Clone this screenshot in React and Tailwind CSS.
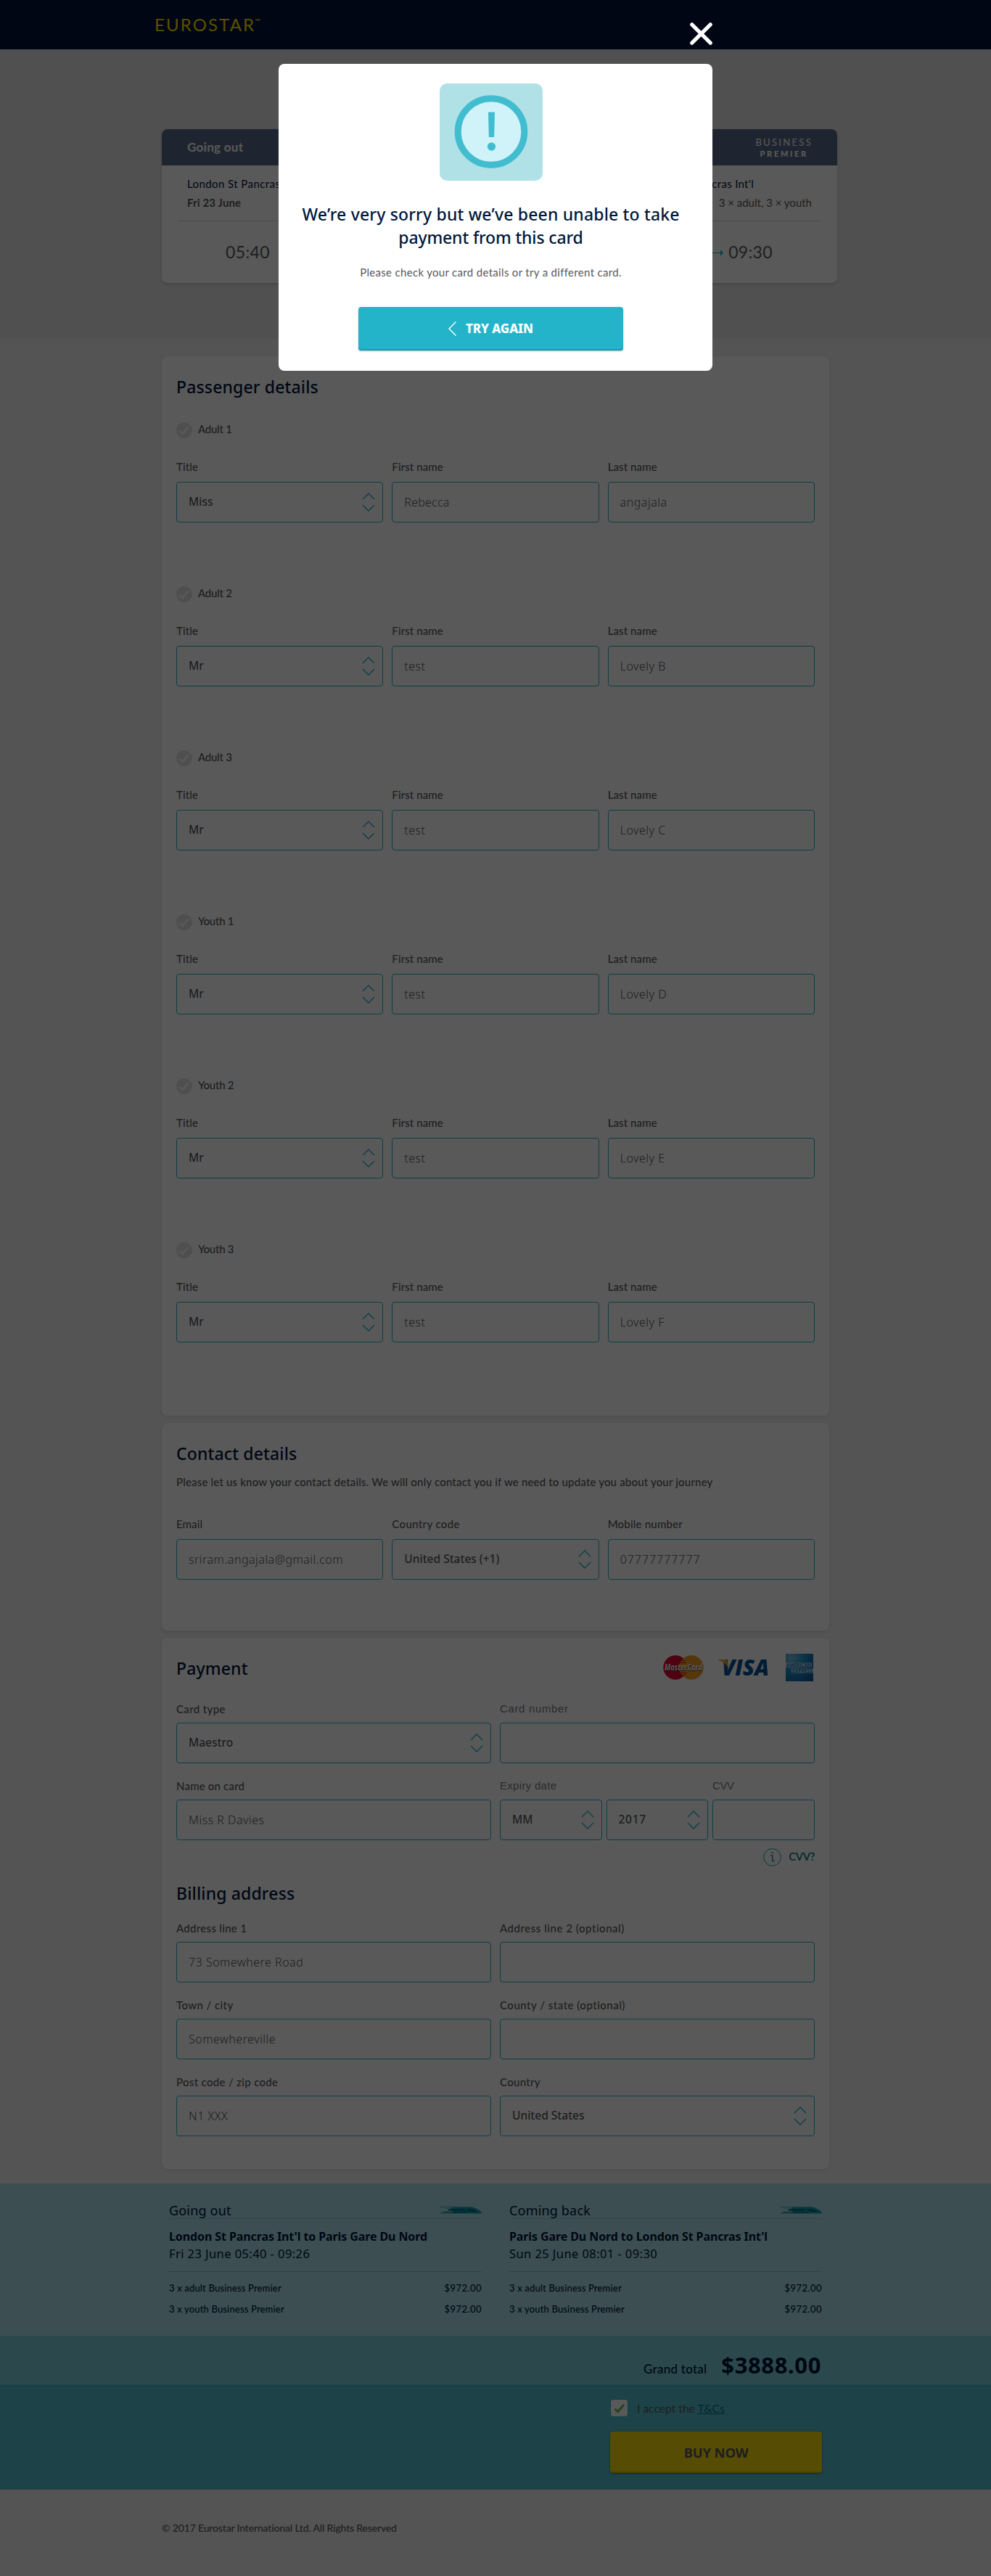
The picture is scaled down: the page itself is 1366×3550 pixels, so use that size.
import React from "react";

const lato = "font-['Lato',sans-serif]";
const noto = "font-['Noto_Sans',sans-serif]";

const Heading = ({ children, className = "" }) => (
  <h2 className={`${noto} text-[23px] font-medium leading-8 tracking-[0.15px] text-[#001339] whitespace-nowrap ${className}`}>{children}</h2>
);

const Stepper = () => (
  <svg width="18" height="28" viewBox="0 0 18 28" fill="none" stroke="#24b4ca" strokeWidth="1.4" className="shrink-0">
    <path d="M1 10 9 2l8 8M1 18l8 8 8-8" />
  </svg>
);

const Label = ({ children, className = "tracking-[0.1px]" }) => (
  <div className={`h-6 text-[15px] font-medium leading-6 text-[#58595b] whitespace-nowrap ${className}`}>{children}</div>
);

const Box = ({ value = "", select = false, className = "" }) => (
  <div className={`flex h-14 items-center justify-between rounded border border-[#24b4ca] bg-white pl-4 pr-2.5 whitespace-nowrap text-[#58595b] ${noto} ${select ? "text-[15.5px] font-medium" : "text-base font-light tracking-[0.5px]"} ${className}`}>
    <span>{value}</span>
    {select && <Stepper />}
  </div>
);

const Field = ({ label, labelClass, gap = "mt-[9px]", ...box }) => (
  <div>
    <Label className={labelClass}>{label}</Label>
    <div className={gap}><Box {...box} /></div>
  </div>
);

const Passenger = ({ name, title, first, last }) => (
  <div className="h-[226px]">
    <div className="flex h-6 gap-2">
      <svg width="22" height="22" viewBox="0 0 22 22" className="mt-[3px] shrink-0">
        <circle cx="11" cy="11" r="11" fill="#e3e3e3" />
        <path d="m4.5 12 3.8 4 8-9" fill="none" stroke="#fff" strokeWidth="2.6" />
      </svg>
      <span className="text-[15px] font-medium leading-6 tracking-[-0.25px] text-[#58595b]">{name}</span>
    </div>
    <div className="mt-7 grid grid-cols-3 gap-3">
      <Field label="Title" value={title} select />
      <Field label="First name" value={first} className={first === "Rebecca" ? "!tracking-[0.22px]" : ""} />
      <Field label="Last name" value={last} />
    </div>
  </div>
);

const passengers = [
  ["Adult 1", "Miss", "Rebecca", "angajala"],
  ["Adult 2", "Mr", "test", "Lovely B"],
  ["Adult 3", "Mr", "test", "Lovely C"],
  ["Youth 1", "Mr", "test", "Lovely D"],
  ["Youth 2", "Mr", "test", "Lovely E"],
  ["Youth 3", "Mr", "test", "Lovely F"],
];

const Card = ({ children, className = "" }) => (
  <section className={`rounded-lg bg-white px-5 pt-[26px] shadow-[0_2px_6px_rgba(0,0,0,0.08)] ${className}`}>{children}</section>
);

const MasterCard = () => (
  <svg width="56" height="34" viewBox="0 0 56 34" className="mt-[2px] overflow-visible">
    <circle cx="17" cy="17" r="16.7" fill="#e3092f" />
    <circle cx="39" cy="17" r="16.7" fill="#f0a023" />
    <path d="M28 5.5h-2M31 7.5h-6M32 10.5h-8M33 24.5h-9M31 27.5h-6" stroke="#e3092f" strokeWidth="1.2" />
    <text x="2" y="21" textLength="52" lengthAdjust="spacingAndGlyphs" fontFamily="Open Sans" fontSize="12" fontWeight="700" fontStyle="italic" fill="#fff" className="[filter:drop-shadow(0.8px_1px_0_#20204a)]">MasterCard</text>
  </svg>
);

const Visa = () => (
  <svg width="70" height="24" viewBox="0 0 70 24" className="mt-[8px] overflow-visible">
    <text x="5" y="22" textLength="65" lengthAdjust="spacingAndGlyphs" fontFamily="Open Sans" fontSize="30" fontWeight="800" fontStyle="italic" fill="#005098">VISA</text>
    <path d="M0 0h9c2 0 3 1 3.500 3l2 10C11 5 6 2 0 1Z" fill="#f2a31b" />
  </svg>
);

const Amex = () => (
  <svg width="38" height="38" viewBox="0 0 38 38">
    <defs>
      <radialGradient id="amex" cx="0.2" cy="0.15" r="1.1">
        <stop offset="0" stopColor="#7fbfe0" />
        <stop offset="0.45" stopColor="#168fca" />
        <stop offset="1" stopColor="#15549b" />
      </radialGradient>
    </defs>
    <rect width="38" height="38" fill="url(#amex)" />
    <path d="M0 12.500h36v6H0zM8 20.500h30v6H8z" fill="#fff" fillOpacity="0.75" />
    <text x="1" y="18" textLength="34" lengthAdjust="spacingAndGlyphs" fontFamily="Open Sans" fontSize="6.500" fontWeight="700" fill="#1478ba">AMERICAN</text>
    <text x="9" y="26" textLength="28" lengthAdjust="spacingAndGlyphs" fontFamily="Open Sans" fontSize="6.500" fontWeight="700" fill="#1478ba">EXPRESS</text>
  </svg>
);

const Train = () => (
  <svg width="57" height="10" viewBox="0 0 57 10" className="mt-[9px]">
    <path d="M0 .3h40c6 0 11 2.500 16 6.500 1.500 1.400.8 2.700-1 2.700H0V8.600h16V7.800H4V7h13V5.500h-7V4h5V2.600H5V2h11V1H0Z" fill="#0f9fb0" />
    <path d="M11 3.500h22l1.500 2H12zM37 3.200c6 0 9 .8 14 3.800h-6c-2 0-3-1.500-8-1.500z" fill="#00606f" />
    <path d="M3 7.400h35" stroke="#00606f" strokeWidth=".7" />
  </svg>
);

const Leg = ({ heading, route, time }) => (
  <div className="flex-1 text-[#001339]">
    <div className="flex h-[26px] justify-between border-b border-[#8fcfd8]">
      <span className={`${noto} text-lg leading-7 tracking-[0.18px]`}>{heading}</span>
      <Train />
    </div>
    <div className={`${noto} mt-3 text-base font-bold leading-6 tracking-[-0.1px] whitespace-nowrap`}>{route}</div>
    <div className={`${noto} text-[16.5px] leading-6 tracking-[0.42px]`}>{time}</div>
    <div className="mt-3 border-t border-[#6fc3cf] pt-2 text-[13px] font-medium leading-[29px] tracking-[0.16px]">
      {["3 x adult Business Premier", "3 x youth Business Premier"].map((row) => (
        <div key={row} className="flex justify-between">
          <span>{row}</span>
          <span className="tracking-[0.45px]">$972.00</span>
        </div>
      ))}
    </div>
  </div>
);

const Modal = () => (
  <div className="absolute inset-0 bg-black/65">
    <div className="mx-auto flex w-[598px] flex-col pt-[31px]">
      <svg width="31" height="31" viewBox="0 0 31 31" className="self-end" stroke="#fff" strokeWidth="5.200" strokeLinecap="round">
        <path d="m2.800 2.800 25.400 25.400M28.200 2.800 2.800 28.200" />
      </svg>
      <div className="mt-[26px] flex h-[423px] flex-col items-center rounded-lg bg-white pr-[13px] pt-[27px]">
        <div className="flex h-[134px] w-[142px] justify-center rounded-[10px] bg-[#b0e1e6]">
          <svg width="102" height="134" viewBox="0 0 102 134">
            <circle cx="51" cy="66.500" r="45.800" fill="#d0f3f9" stroke="#42bdd0" strokeWidth="9" />
            <path d="M47 39.500h9l-.8 34.500h-7.400Z" fill="#42bdd0" />
            <circle cx="51.500" cy="87" r="5.700" fill="#42bdd0" />
          </svg>
        </div>
        <h1 className={`${noto} mt-[30px] text-center text-[23px] font-medium leading-8 text-[#00183c] whitespace-nowrap`}>
          <span className="block tracking-[0.17px]">We’re very sorry but we’ve been unable to take</span>
          <span className="block tracking-[-0.15px]">payment from this card</span>
        </h1>
        <p className="mt-5 text-[15px] leading-6 tracking-[0.32px] text-[#58595b]">Please check your card details or try a different card.</p>
        <button className={`${noto} mt-9 flex h-[60px] w-[365px] items-center rounded pl-[124px] gap-[13px] bg-[#24b4ca] text-[17px] font-extrabold tracking-[-0.09px] text-white shadow-[inset_0_-2px_0_#1d9bae,0_1px_2px_rgba(0,0,0,0.3)]`}>
          <svg width="11" height="20" viewBox="0 0 11 20" fill="none" stroke="#fff" strokeWidth="1.400"><path d="M10.500.5 1 10l9.500 9.500" /></svg>
          TRY AGAIN
        </button>
      </div>
    </div>
  </div>
);

export default function App() {
  return (
    <div className={`${lato} relative h-[3550px] w-[1366px] overflow-hidden bg-[#f0f0f0]`}>
      <header className="h-[68px] bg-[#001339] pl-[213px] pt-[18px]">
        <div className="flex h-8 text-2xl leading-8 tracking-[2.1px] text-[#ffe100]">
          EUROSTAR<span className="-mt-[5px] ml-[-1px] text-[10px] tracking-[0.3px]">™</span>
        </div>
      </header>

      <div className="h-[398px] bg-[#e5e5e5] pl-[223px] pt-[110px]">
        <div className="h-[212px] w-[931px] overflow-hidden rounded-lg bg-white shadow-[0_2px_5px_rgba(0,0,0,0.15)]">
          <div className="flex h-[50px] items-center justify-between bg-[#5b6b89] pl-[35px] pr-[34px] text-white">
            <span className="text-[17px] font-bold tracking-[0.29px]">Going out</span>
            <div className="flex flex-col items-center pt-[2px] leading-4">
              <span className="text-[13px] tracking-[2.300px]">BUSINESS</span>
              <span className="text-[11px] font-black tracking-[2.700px]">PREMIER</span>
            </div>
          </div>
          <div className="ml-[23px] mr-[23px] flex h-[77px] justify-between border-b border-[#d9d9d9] pl-3 pr-3 pt-[12px] leading-[26px] text-[15px] whitespace-nowrap">
            <div>
              <div className="tracking-[0.42px] text-[#001339]">London St Pancras Int'l</div>
              <div className="font-bold tracking-[0.14px] text-[#58595b]">Fri 23 June</div>
            </div>
            <div className="flex flex-col items-end">
              <div className="mr-[80px] tracking-[0.3px] text-[#001339]">London St Pancras Int'l</div>
              <div className="text-[#58595b]">3 × adult, 3 × youth</div>
            </div>
          </div>
          <div className="flex items-center justify-between pl-[88px] pr-[89px] pt-[26px] text-[23px] leading-8 tracking-[0.35px] text-[#58595b]">
            <span>05:40</span>
            <span className="flex items-center gap-[7px]">
              <svg width="40" height="9" viewBox="0 0 40 9" className="mt-[3px]"><path d="M0 4h37v1H0z" fill="#24b4ca" /><path d="m36 0 4 4.500L36 9z" fill="#24b4ca" /></svg>
              09:30
            </span>
          </div>
        </div>
      </div>

      <main className="ml-[223px] mt-[25px] flex w-[920px] flex-col gap-2.5">
        <Card className="h-[1460px]">
          <Heading className="mb-[30px]">Passenger details</Heading>
          {passengers.map(([name, title, first, last]) => (
            <Passenger key={name} name={name} title={title} first={first} last={last} />
          ))}
        </Card>

        <Card className="h-[286px]">
          <Heading>Contact details</Heading>
          <p className="mt-[11px] text-[15px] font-medium leading-6 tracking-[0.18px] text-[#58595b]">
            Please let us know your contact details. We will only contact you if we need to update you about your journey
          </p>
          <div className="mt-[34px] grid grid-cols-3 gap-3">
            <Field label="Email" value="sriram.angajala@gmail.com" />
            <Field label="Country code" labelClass="tracking-[0.36px]" value="United States (+1)" select />
            <Field label="Mobile number" labelClass="tracking-[0.200px]" value="07777777777" className="!tracking-[0.95px]" />
          </div>
        </Card>

        <Card className="h-[732px]">
          <div className="flex h-8 justify-between">
            <Heading>Payment</Heading>
            <div className="-mt-[4px] mr-[2px] flex">
              <MasterCard />
              <div className="ml-5"><Visa /></div>
              <div className="ml-[23px]"><Amex /></div>
            </div>
          </div>
          <div className="mt-7 grid grid-cols-2 gap-x-3 gap-y-[19px]">
            <Field gap="mt-[7px]" label="Card type" labelClass="tracking-[0.36px]" value="Maestro" select />
            <Field gap="mt-[7px]" label="Card number" labelClass="font-['Liberation_Sans',sans-serif] !font-normal text-[#7c7d80]! tracking-[0.65px]" />
            <Field gap="mt-[7px]" label="Name on card" labelClass="tracking-[0.19px]" value="Miss R Davies" />
            <div className="flex gap-1.5">
              <div className="w-[287px]">
                <Label className="font-['Liberation_Sans',sans-serif] !font-normal text-[#7c7d80]! tracking-[0.300px]">Expiry date</Label>
                <div className="mt-[7px] grid grid-cols-2 gap-1.5">
                  <Box value="MM" select />
                  <Box value="2017" select className="tracking-[0.700px]" />
                </div>
              </div>
              <div className="flex-1">
                <Field gap="mt-[7px]" label="CVV" labelClass="font-['Liberation_Sans',sans-serif] !font-normal text-[#7c7d80]! tracking-[-0.400px]" />
              </div>
            </div>
          </div>
          <div className="mt-[11px] flex h-6 items-center justify-end gap-2.5">
            <svg width="25" height="25" viewBox="0 0 25 25" fill="none" stroke="#24a4b8">
              <circle cx="12.500" cy="12.500" r="11.800" />
              <path d="M9.800 10h3v8M12.500 17.700h3.200" strokeWidth="1.700" />
              <circle cx="12.600" cy="6.200" r=".8" fill="#24a4b8" />
            </svg>
            <span className="-mt-[2px] text-[15px] font-semibold leading-6 tracking-[-0.400px] text-[#007080]">CVV?</span>
          </div>

          <Heading className="mt-[22px]">Billing address</Heading>
          <div className="mt-5 grid grid-cols-2 gap-x-3 gap-y-[19px]">
            <Field gap="mt-[7px]" label="Address line 1" labelClass="tracking-[0.300px]" value="73 Somewhere Road" />
            <Field gap="mt-[7px]" label="Address line 2 (optional)" labelClass="tracking-[0.54px]" />
            <Field gap="mt-[7px]" label="Town / city" labelClass="tracking-[0.400px]" value="Somewhereville" />
            <Field gap="mt-[7px]" label="County / state (optional)" labelClass="tracking-[0.500px]" />
            <Field gap="mt-[7px]" label="Post code / zip code" labelClass="tracking-[0.32px]" value="N1 XXX" />
            <Field gap="mt-[7px]" label="Country" labelClass="tracking-[0.300px]" value="United States" select />
          </div>
        </Card>
      </main>

      <div className="mt-5 flex h-[210px] gap-[38px] bg-[#abdfe7] px-[233px] pt-[23px]">
        <Leg heading="Going out" route="London St Pancras Int'l to Paris Gare Du Nord" time="Fri 23 June 05:40 - 09:26" />
        <Leg heading="Coming back" route="Paris Gare Du Nord to London St Pancras Int'l" time="Sun 25 June 08:01 - 09:30" />
      </div>
      <div className="flex h-[67px] items-baseline justify-end gap-5 bg-[#7bd1d9] pr-[234px] pt-5 text-[#001339]">
        <span className="text-[17px] font-medium tracking-[0.25px]">Grand total</span>
        <span className={`${noto} text-[31px] font-bold leading-10 tracking-[0.6px]`}>$3888.00</span>
      </div>
      <div className="h-[145px] bg-[#53bfd1] pl-[841px] pt-5">
        <div className="flex h-[25px] items-center gap-[12px]">
          <div className="flex h-[25px] w-[25px] items-center justify-center rounded border border-[#24b4ca] bg-white">
            <svg width="16" height="14" viewBox="0 0 16 14" fill="none" stroke="#6fbf4f" strokeWidth="3"><path d="m1.500 7.500 4 4L14 2" /></svg>
          </div>
          <span className="text-base leading-6 tracking-[-0.15px] text-[#58595b]">I accept the <span className="text-[#00707f] underline">T&amp;Cs</span></span>
        </div>
        <button className={`${noto} mt-5 flex h-[57px] w-[292px] items-center justify-center rounded bg-[#f9d90a] text-[18.500px] font-bold tracking-[-0.200px] text-[#58595b] shadow-[inset_0_-2px_0_#dcbc00,0_1px_3px_rgba(0,0,0,0.4)]`}>BUY NOW</button>
      </div>
      <footer className="pl-[223px] pt-[43px] text-sm font-medium leading-5 tracking-[-0.16px] text-[#58595b]">© 2017 Eurostar International Ltd. All Rights Reserved</footer>

      <Modal />
    </div>
  );
}
